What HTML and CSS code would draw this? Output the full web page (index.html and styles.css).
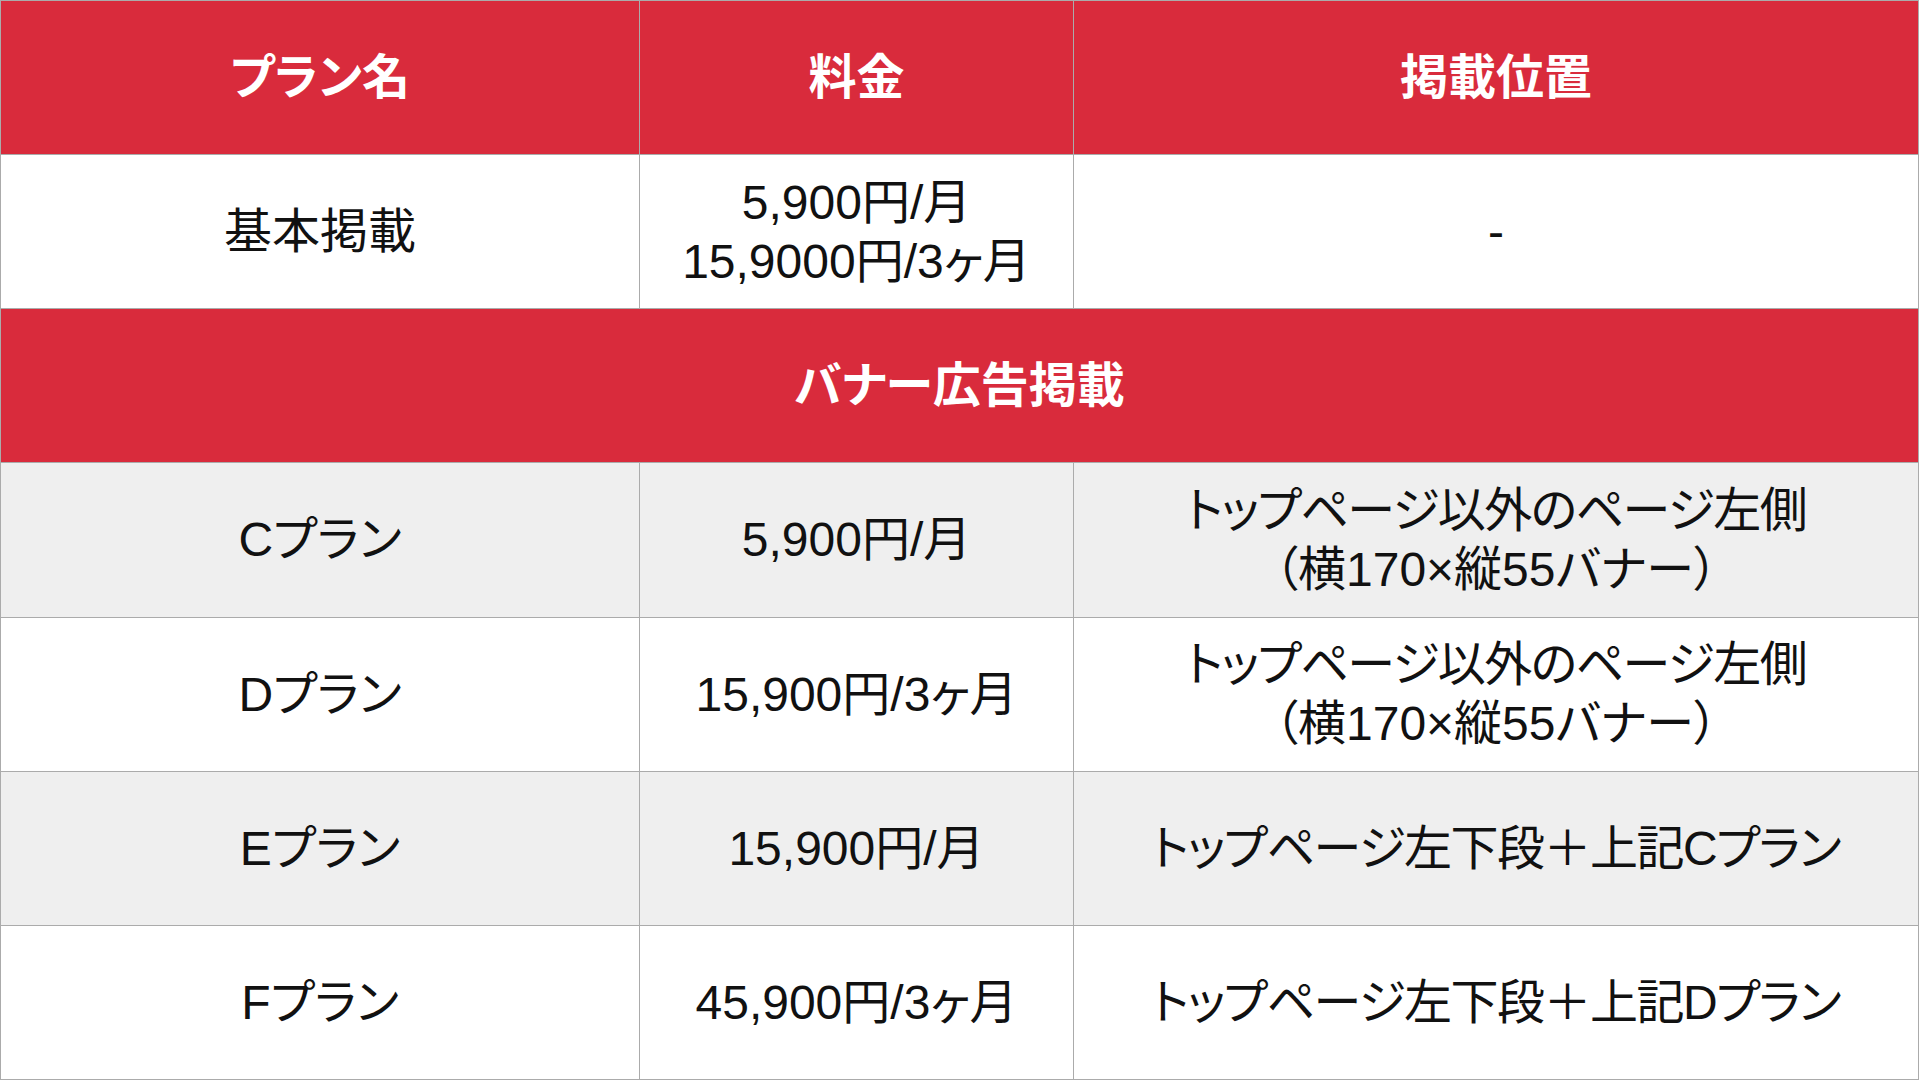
FILE: index.html
```html
<!DOCTYPE html>
<html lang="ja">
<head>
<meta charset="utf-8">
<title>掲載プラン</title>
<link rel="stylesheet" href="styles.css">
</head>
<body>
<div class="table">
  <div class="cell head">プラン名</div>
  <div class="cell head">料金</div>
  <div class="cell head">掲載位置</div>

  <div class="cell">基本掲載</div>
  <div class="cell"><span class="line">5,900円/月</span><span class="line">15,9000円/3ヶ月</span></div>
  <div class="cell">-</div>

  <div class="cell head span">バナー広告掲載</div>

  <div class="cell alt">Cプラン</div>
  <div class="cell alt">5,900円/月</div>
  <div class="cell alt"><span class="line tight">トップページ以外のページ左側</span><span class="line">（横170×縦55バナー）</span></div>

  <div class="cell">Dプラン</div>
  <div class="cell">15,900円/3ヶ月</div>
  <div class="cell"><span class="line tight">トップページ以外のページ左側</span><span class="line">（横170×縦55バナー）</span></div>

  <div class="cell alt">Eプラン</div>
  <div class="cell alt">15,900円/月</div>
  <div class="cell alt"><span class="line tight">トップページ左下段＋上記Cプラン</span></div>

  <div class="cell">Fプラン</div>
  <div class="cell">45,900円/3ヶ月</div>
  <div class="cell"><span class="line tight">トップページ左下段＋上記Dプラン</span></div>
</div>
</body>
</html>
```

FILE: styles.css
```css
html, body {
  margin: 0;
  padding: 0;
  background: #ffffff;
}

.table {
  box-sizing: border-box;
  width: 1919px;
  height: 1080px;
  display: grid;
  grid-template-columns: 638px 433px 1fr;
  grid-template-rows: repeat(7, 1fr);
  gap: 1px;
  padding: 1px;
  background: #ababab;
  font-family: "Liberation Sans", "Noto Sans CJK JP", sans-serif;
  font-feature-settings: "palt";
  font-size: 48px;
  line-height: 59px;
  color: #111111;
}

.cell {
  display: flex;
  flex-direction: column;
  align-items: center;
  justify-content: center;
  text-align: center;
  background: #ffffff;
}

.cell.alt {
  background: #efefef;
}

.cell.head {
  background: #d92b3c;
  color: #ffffff;
  font-weight: bold;
}

.cell.span {
  grid-column: 1 / 4;
}

.line {
  display: block;
  white-space: nowrap;
}

.tight {
  letter-spacing: -1.5px;
}
```
